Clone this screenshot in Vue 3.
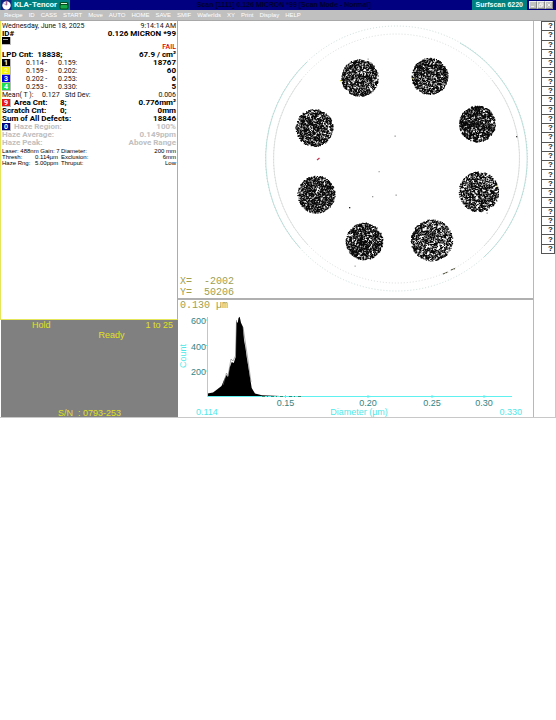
<script setup>
const menu = ['Recipe', 'ID', 'CASS', 'START', 'Move', 'AUTO', 'HOME', 'SAVE', 'SMIF', 'WaferIds', 'XY', 'Print', 'Display', 'HELP']

const bins = [
  { n: 1, from: '0.114 -', to: '0.159:', count: '18767', tone: 'black' },
  { n: 2, from: '0.159 -', to: '0.202:', count: '60', tone: 'yellow' },
  { n: 3, from: '0.202 -', to: '0.253:', count: '6', tone: 'blue' },
  { n: 4, from: '0.253 -', to: '0.330:', count: '5', tone: 'green' }
]

const settings = [
  ['Laser: 488nm Gain: 7', '', 'Diameter:', '200 mm'],
  ['Thresh:', '0.114µm', 'Exclusion:', '6mm'],
  ['Haze Rng:', '5.00ppm', 'Thruput:', 'Low']
]

// Repeatable random numbers so the map looks the same on every load
let seed = 6220
function random() {
  seed = (seed * 1664525 + 1013904223) % 4294967296
  return seed / 4294967296
}

function speckle(x, y, r, density) {
  let d = ''
  const count = Math.round(Math.PI * r * r * density)
  for (let i = 0; i < count; i++) {
    const a = random() * Math.PI * 2
    const q = Math.sqrt(random()) * r
    const px = (x + Math.cos(a) * q - 0.55).toFixed(1)
    const py = (y + Math.sin(a) * q - 0.55).toFixed(1)
    d += `M${px} ${py}h1.1v1.1h-1.1z`
  }
  return d
}

const deposits = [
  [360, 78, 18.5, 1.1], [430, 76.5, 18.2, 1.2],
  [314.5, 128, 18.7, 1.15], [477.5, 124, 18.2, 1.3],
  [316.5, 194.5, 18.7, 1.2], [479, 192, 20, 1],
  [364.5, 241.5, 18.5, 1.25], [432, 240.5, 20.8, 0.9]
].map(([x, y, r, k]) => speckle(x, y, r, k))

const stray = [
  [395, 136, '#999'], [379, 171.5, '#aaa'], [372.5, 196.5, '#999'], [396, 195, '#999'],
  [349.5, 207.5, '#222'], [516.5, 136.5, '#444'], [355, 266, '#aaa'], [487, 213, '#999'],
  [340.5, 80.5, '#cc4'], [413, 78.5, '#cc4'], [497, 186, '#cc4'], [368, 59, '#aaa']
]

const countTicks = [[600, 320], [400, 345.5], [200, 371]]
const sizeTicks = [['0.15', 285.5], ['0.20', 368], ['0.25', 432], ['0.30', 484]]
</script>

<template>
  <div class="app">
    <header class="titlebar">
      <div class="brand">
        <svg class="apple" viewBox="0 0 11 10" aria-hidden="true">
          <rect width="11" height="10" fill="#102080" />
          <circle cx="6" cy="5.5" r="4.2" fill="#fff" />
          <path d="M5.5 1h1v4h-1zM2.5 3l3 2" fill="#a36a9c" stroke="#a36a9c" stroke-width=".6" />
        </svg>
        <span>KLA-Tencor</span>
        <svg class="disk" viewBox="0 0 10 9" aria-hidden="true">
          <rect x=".5" y="1" width="9" height="7.5" rx="2" fill="#064d20" />
          <rect x="1.5" y="4" width="7" height="3.5" rx="1" fill="#16a94a" />
          <path d="M2 2.5h6" stroke="#d8f5df" />
        </svg>
      </div>
      <h1>Scan [1111]  0.126 MICRON *99 [Scan Mode - Normal]</h1>
      <div class="model">Surfscan 6220</div>
      <div class="window-buttons">
        <button aria-label="Minimize"><svg viewBox="0 0 8 8"><path d="M1.5 6h4" /></svg></button>
        <button aria-label="Restore"><svg viewBox="0 0 8 8"><path d="M3 3V1.5h3.5V5H5M1.5 3.5H5v3H1.5z" /></svg></button>
        <button aria-label="Close"><svg viewBox="0 0 8 8"><path d="M2 2l4 4M6 2L2 6" /></svg></button>
      </div>
    </header>

    <nav class="menu">
      <a v-for="item in menu" :key="item" href="#">{{ item }}</a>
    </nav>

    <main class="workspace">
      <aside class="side">
        <section class="report">
          <div class="row light"><span>Wednesday, June 18, 2025</span><span>9:14:14 AM</span></div>
          <div class="row bold"><span>ID#</span><span>0.126 MICRON *99</span></div>
          <div class="row marker"><i class="chip black"><b class="dash"></b></i></div>
          <div class="row fail"><span>FAIL</span></div>
          <div class="row bold"><span>LPD Cnt:&nbsp; 18838;</span><span>67.9 / cm²</span></div>
          <div v-for="b in bins" :key="b.n" class="row bin">
            <i class="chip" :class="b.tone">{{ b.n }}</i>
            <span class="light">{{ b.from }}</span>
            <span class="light">{{ b.to }}</span>
            <span class="bold">{{ b.count }}</span>
          </div>
          <div class="row light stats"><span>Mean( T ):</span><span>0.127</span><span>Std Dev:</span><span>0.006</span></div>
          <div class="row bold area"><span><i class="chip red">9</i>Area Cnt:</span><span>8;</span><span>0.776mm²</span></div>
          <div class="row bold area"><span>Scratch Cnt:</span><span>0;</span><span>0mm</span></div>
          <div class="row bold"><span>Sum of All Defects:</span><span>18846</span></div>
          <div class="row bold haze"><span><i class="chip navy">0</i>Haze Region:</span><span>100%</span></div>
          <div class="row bold haze"><span>Haze Average:</span><span>0.149ppm</span></div>
          <div class="row bold haze"><span>Haze Peak:</span><span>Above Range</span></div>
          <div class="settings">
            <div v-for="s in settings" :key="s[0]" class="row setting">
              <span>{{ s[0] }}</span><span>{{ s[1] }}</span><span>{{ s[2] }}</span><span>{{ s[3] }}</span>
            </div>
          </div>
        </section>
        <section class="status">
          <div class="status-top"><span>Hold</span><span>1 to 25</span></div>
          <div class="ready">Ready</div>
          <div class="serial">S/N&nbsp; : 0793-253</div>
        </section>
      </aside>

      <div class="views">
        <section class="map">
          <svg viewBox="178 22 355 276" role="img" aria-label="Wafer defect map">
            <g fill="none">
              <ellipse cx="396.5" cy="158.5" rx="131" ry="132.5" stroke="#b4cfcc" stroke-width=".7" stroke-dasharray="1 2" />
              <path d="M307 62A131 132.5 0 0 0 300 248M460 43A131 132.5 0 0 1 484 257" stroke="#a4d2cb" stroke-width=".7" />
              <ellipse cx="396.5" cy="158.5" rx="123" ry="124.5" stroke="#c8cccc" stroke-width=".7" stroke-dasharray="1 2" />
              <path d="M302 79A123 124.5 0 0 0 308 245M492 80A123 124.5 0 0 1 484 246" stroke="#d2d6d6" stroke-width=".7" />
            </g>
            <path v-for="(d, i) in deposits" :key="i" :d="d" fill="#080808" />
            <rect v-for="(s, i) in stray" :key="'s' + i" :x="s[0] - 0.5" :y="s[1] - 0.5" width="1.3" height="1.3" :fill="s[2]" />
            <path d="M317 160l2.5-2" stroke="#c03050" stroke-width="1.2" />
            <path d="M443 274l5-2M451 270l4-1.5" stroke="#555540" stroke-width="1.2" stroke-dasharray="2 .6" />
          </svg>
          <pre class="readout">X=  -2002
Y=  50206</pre>
        </section>
        <section class="histogram">
          <div class="cursor">0.130 µm</div>
          <svg viewBox="178 312 355 105" role="img" aria-label="Defect count by diameter">
            <path d="M207.5 396V393.5L213 392.5 217 389.5 221.5 386 224 380 226.5 375 228 377 229.5 368 231.7 362 233.7 363 235.7 357 236.3 321 237.7 323 238.5 318 239.7 316.7 241 322.7 243 327 244 340 245.5 348 246.7 357 249 371 251.7 388 255 393.5 262 395.2 280 396z" fill="#000" />
            <path d="M223 385L226.5 373 228 376 231 359 233 361 235.5 356 236.5 320M243 327L247.5 357 251 382" fill="none" stroke="#777" stroke-width=".6" />
            <path d="M207.5 317V396.5H512" fill="none" stroke="#5ff0f0" />
            <path d="M262 396.5h40" fill="none" stroke="#164" stroke-width=".7" stroke-dasharray="3 2 1 3" />
            <g v-for="t in countTicks" :key="t[0]">
              <path :d="`M205.5 ${t[1]}h2`" stroke="#5ff0f0" />
              <text class="tick" :x="206" :y="t[1] + 4" text-anchor="end">{{ t[0] }}</text>
            </g>
            <g v-for="t in sizeTicks" :key="t[0]">
              <path :d="`M${t[1]} 395v3`" stroke="#5ff0f0" />
              <text class="tick" :x="t[1]" y="406" text-anchor="middle">{{ t[0] }}</text>
            </g>
            <text class="axis" x="196" y="415">0.114</text>
            <text class="axis" x="359" y="415" text-anchor="middle">Diameter (µm)</text>
            <text class="axis" x="522" y="415" text-anchor="end">0.330</text>
            <text class="axis" transform="translate(186 356) rotate(-90)" text-anchor="middle">Count</text>
          </svg>
        </section>
      </div>

      <aside class="help">
        <div class="help-list">
          <button v-for="n in 25" :key="n">?</button>
        </div>
      </aside>
    </main>
  </div>
</template>

<style>
body {
  background: #fff;
}
</style>

<style scoped>
* {
  box-sizing: border-box;
}
.app {
  font-family: "Liberation Sans", Arial, sans-serif;
  font-size: 7px;
  color: #000;
}
.titlebar {
  display: flex;
  align-items: center;
  height: 10px;
  background: #000080;
  font-weight: bold;
}
.brand {
  display: flex;
  align-items: center;
  gap: 2px;
  height: 10px;
  padding-right: 1px;
  background: #008080;
  color: #e4ffff;
}
.apple {
  width: 12px;
  height: 10px;
}
.disk {
  width: 10px;
  height: 9px;
}
h1 {
  flex: 1;
  margin: 0;
  overflow: hidden;
  font-size: 7px;
  line-height: 10px;
  text-align: center;
  white-space: nowrap;
  padding-left: 26px;
  color: #00002e;
}
.model {
  height: 10px;
  padding: 0 4px;
  background: #008080;
  color: #e4ffff;
  font-size: 7px;
  line-height: 10px;
}
.brand span {
  font-family: Roboto, sans-serif;
  font-size: 8px;
  line-height: 10px;
}
.window-buttons {
  display: flex;
  padding: 0 3px 0 2px;
}
.window-buttons button {
  width: 8px;
  height: 8px;
  padding: 0;
  border: 1px solid;
  border-color: #eee #888 #888 #eee;
  background: #c0c0c0;
}
.window-buttons svg {
  display: block;
  width: 100%;
  height: 100%;
}
.window-buttons path {
  fill: none;
  stroke: #fff;
}
.menu {
  display: flex;
  align-items: center;
  gap: 6px;
  height: 11px;
  padding-left: 4px;
  border-bottom: 1px solid #a8a8a8;
  background: #c0c0c0;
}
.menu a {
  color: #fff;
  font-size: 6px;
  line-height: 10px;
  text-decoration: none;
}
.workspace {
  display: grid;
  grid-template-columns: 178px minmax(0, 1fr) 22px;
  border-bottom: 1px solid #c8c8c8;
}
.side {
  display: flex;
  flex-direction: column;
}
.report {
  height: 299px;
  padding: 1px 1px 0;
  border: solid #e6e65a;
  border-width: 0 1px 1px;
  border-right-color: #b8b850;
  background: #fff;
  font-family: Roboto, sans-serif;
}
.row {
  display: flex;
  align-items: center;
  justify-content: space-between;
  height: 8px;
  line-height: 8px;
  white-space: nowrap;
}
.light {
  font-size: 7px;
  color: #111;
}
.bold {
  font-size: 8px;
  font-weight: bold;
}
.marker {
  height: 6px;
}
.fail {
  justify-content: flex-end;
  height: 7px;
  color: #e00000;
  font-size: 7px;
  font-weight: 500;
  line-height: 7px;
}
.chip {
  display: inline-block;
  width: 9px;
  height: 8px;
  color: #fff;
  font-size: 7px;
  font-style: normal;
  font-weight: bold;
  line-height: 8px;
  text-align: center;
  border: solid #bbb;
  border-width: 0 1px 1px 0;
}
.row span .chip {
  margin-right: 3px;
  vertical-align: top;
}
.dash {
  display: block;
  height: 1px;
  margin: 2px 2px 0 1px;
  background: #aaa;
}
.black { background: #000; }
.yellow { background: #f5f500; color: #fff9a0; }
.blue { background: #0000e0; }
.green { background: #20dd50; }
.red { background: #e81818; }
.navy { background: #000080; }
.bin {
  display: grid;
  grid-template-columns: 24px 32px 40px 1fr;
}
.bin .bold,
.stats span:last-child,
.area span:last-child,
.setting span:last-child {
  text-align: right;
}
.stats {
  display: grid;
  grid-template-columns: 40px 23px 40px 1fr;
}
.area {
  display: grid;
  grid-template-columns: 58px 40px 1fr;
}
.haze {
  color: #c0c0c0;
}
.settings {
  padding-top: 1px;
}
.setting {
  display: grid;
  grid-template-columns: 33px 26px 40px 1fr;
  height: 6px;
  font-family: "Liberation Sans", Arial, sans-serif;
  font-size: 6px;
  line-height: 6px;
}
.status {
  display: flex;
  flex: 1;
  flex-direction: column;
  margin-left: 1px;
  background: #808080;
  color: #e0e020;
  font-size: 9px;
  line-height: 10px;
}
.status-top {
  display: flex;
  justify-content: space-between;
  padding: 0 5px 0 31px;
}
.ready {
  padding-left: 44px;
  text-align: center;
}
.serial {
  margin-top: auto;
  line-height: 8px;
  text-align: center;
}
.views {
  min-width: 0;
  border-right: 1px solid #b8b8b8;
}
.map {
  position: relative;
  padding-top: 1px;
  border-bottom: 2px solid #b0b0b0;
}
.map svg,
.histogram svg {
  display: block;
  width: 100%;
}
.readout {
  position: absolute;
  bottom: 0;
  left: 2px;
  margin: 0;
}
.readout,
.cursor {
  color: #a0a050;
  font-family: "Liberation Mono", monospace;
  font-size: 10px;
  line-height: 12px;
}
.readout {
  line-height: 11px;
}
.cursor {
  height: 12px;
  padding-left: 2px;
}
.tick,
.axis {
  font-size: 9px;
}
.tick {
  fill: #348484;
}
.axis {
  fill: #50e8e8;
}
.help {
  padding-left: 7px;
  border-right: 1px solid #c8c8c8;
}
.help-list {
  display: grid;
  grid-template-rows: repeat(25, 1fr);
  height: 233px;
  border-top: 1px solid #555;
}
.help button {
  min-height: 0;
  padding: 0 0 0 5px;
  border: solid #555;
  border-width: 0 1px 1px;
  background: #fff;
  color: #222;
  font: bold 8px/8px "Liberation Sans", Arial, sans-serif;
}
</style>
